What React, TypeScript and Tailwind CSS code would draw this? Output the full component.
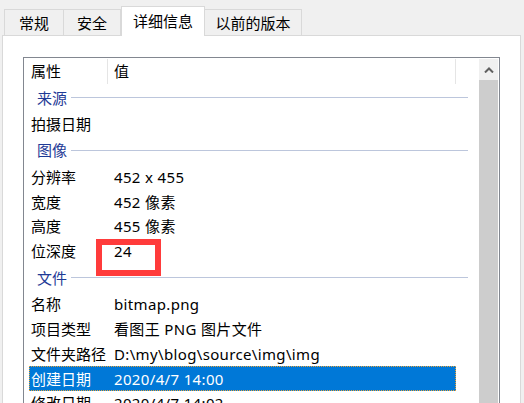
import React from 'react'

type Row =
  | { kind: 'group'; label: string }
  | { kind: 'item'; name: string; value?: string; selected?: boolean }

const rows: Row[] = [
  { kind: 'group', label: '来源' },
  { kind: 'item', name: '拍摄日期' },
  { kind: 'group', label: '图像' },
  { kind: 'item', name: '分辨率', value: '452 x 455' },
  { kind: 'item', name: '宽度', value: '452 像素' },
  { kind: 'item', name: '高度', value: '455 像素' },
  { kind: 'item', name: '位深度', value: '24' },
  { kind: 'group', label: '文件' },
  { kind: 'item', name: '名称', value: 'bitmap.png' },
  { kind: 'item', name: '项目类型', value: '看图王 PNG 图片文件' },
  { kind: 'item', name: '文件夹路径', value: 'D:\\my\\blog\\source\\img\\img' },
  { kind: 'item', name: '创建日期', value: '2020/4/7 14:00', selected: true },
  { kind: 'item', name: '修改日期', value: '2020/4/7 14:02' },
]

const font = { fontFamily: '"Noto Sans", "Noto Sans CJK SC", sans-serif' }

function Tabs() {
  return (
    <div className="flex items-end h-[35px] pl-[4px]">
      <div className="w-[60px] h-[26px] border-l border-t border-r border-[#d9d9d9] flex items-center justify-center pt-[2px]">
        常规
      </div>
      <div className="w-[57px] h-[26px] border-t border-r border-[#d9d9d9] flex items-center justify-center pt-[2px]">
        安全
      </div>
      <div className="relative z-10 -mb-[1px] w-[84px] h-[30px] bg-white border-l border-t border-r border-[#d9d9d9] flex items-center justify-center">
        详细信息
      </div>
      <div className="w-[97px] h-[26px] border-t border-r border-[#d9d9d9] flex items-center justify-center pt-[2px]">
        以前的版本
      </div>
    </div>
  )
}

function ListRow({ row }: { row: Row }) {
  if (row.kind === 'group') {
    return (
      <div className="h-[28px] flex items-center pl-[13px] pr-[11px]">
        <span className="text-[#1e3a96]">{row.label}</span>
        <div className="flex-1 h-px bg-[#bcc6dc] ml-[4px]" />
      </div>
    )
  }
  return (
    <div
      className={
        row.selected
          ? 'h-[25px] ml-[5px] w-[427px] flex items-center bg-[#0078d7] text-white border border-dotted border-[#e8a33a]'
          : 'h-[25px] ml-[5px] w-[427px] flex items-center border border-transparent'
      }
    >
      <span className="w-[84px] pl-[1px] whitespace-nowrap">{row.name}</span>
      <span className="whitespace-nowrap tracking-[0.35px]">{row.value}</span>
    </div>
  )
}

export default function App() {
  return (
    <div className="relative w-[524px] h-[403px] overflow-hidden bg-[#f0f0f0] text-[15px] text-black" style={font}>
      <Tabs />
      <div className="ml-[2px] w-[519px] h-[400px] bg-white border border-[#d9d9d9] pt-[21px] pl-[20px]">
        <div className="w-[477px] h-[360px] border border-[#828790] flex">
          <div className="flex-1 flex flex-col">
            <div className="h-[26px] flex items-center shrink-0">
              <span className="w-[83px] pl-[7px]">属性</span>
              <div className="w-px h-[25px] self-end bg-[#e5e5e5]" />
              <span className="w-[347px] pl-[6px]">值</span>
              <div className="w-px h-[25px] self-end bg-[#e5e5e5]" />
            </div>
            {rows.map((r, i) => (
              <ListRow key={i} row={r} />
            ))}
          </div>
          <div className="w-[19px] mt-[1px] mr-[1px] flex flex-col">
            <div className="h-[21px] bg-[#f0f0f0] flex items-center justify-center">
              <svg width="10" height="6" viewBox="0 0 10 6">
                <polyline points="1,5.5 5,1.5 9,5.5" fill="none" stroke="#606060" strokeWidth="2" />
              </svg>
            </div>
            <div className="flex-1 bg-[#cdcdcd]" />
          </div>
        </div>
      </div>
      <div className="absolute left-[96px] top-[239px] w-[65px] h-[37px] border-[6px] border-[#ff3b3b]" />
    </div>
  )
}
